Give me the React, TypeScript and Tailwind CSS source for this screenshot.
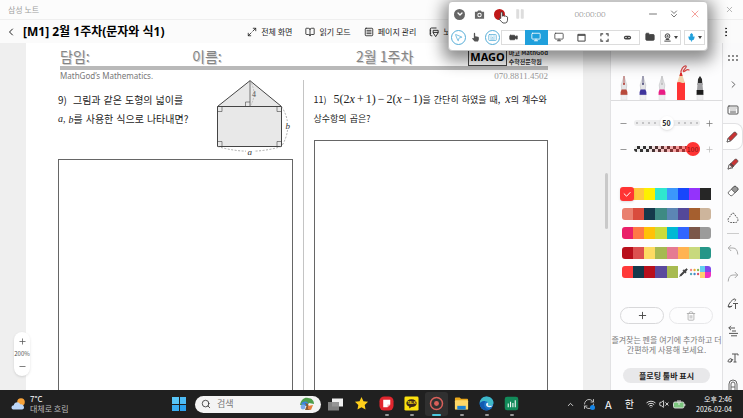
import React from "react";
import clsx from "clsx";
import {
  BookOpen,
  ChevronDown,
  ChevronLeft,
  ChevronRight,
  ChevronsDown,
  ChevronUp,
  EllipsisVertical,
  Folder,
  Keyboard,
  Maximize2,
  Mic,
  Minus,
  Monitor,
  MousePointer2,
  Pause,
  Pipette,
  Plus,
  RefreshCw,
  Search,
  SquareMenu,
  Trash2,
  Video,
  VolumeX,
  Wifi,
  X,
} from "lucide-react";

type IconProps = { className?: string };

const palettes = [
  ["#ff3b3b", "#ffc83d", "#fdf000", "#2fe6cf", "#3b97fb", "#1747fb", "#9433fb", "#262626"],
  ["#e9806f", "#d94c3d", "#15394b", "#3e8a83", "#5c86b4", "#544899", "#a55f2f", "#cdb59c"],
  ["#ea2069", "#ff7846", "#ffc107", "#cadb3a", "#00b9d4", "#3165ff", "#7b574a", "#9b9b9b"],
  ["#b80f1c", "#dc5050", "#fddb63", "#a6b952", "#e57a92", "#ffb351", "#c8d97d", "#259688"],
];
const recent = ["#ff3939", "#14394b", "#b80f1c", "#5a4a9d", "#a7ba50"];

const pens = [
  { name: "Fountain pen", color: "#b84a3c", tip: "#b23b33", x: "ml-2" },
  { name: "Calligraphy pen", color: "#3f349c", tip: "#4c4a7a", x: "" },
  { name: "Ballpoint pen", color: "#e91e84", tip: "#bbbbbb", x: "" },
];

const PenNib = ({ color, tip }: { color: string; tip: string }) => (
  <svg viewBox="0 0 10 26" className="h-[26px] w-[10px]">
    <path d="M5 2 L2.2 11 L2.8 16 H7.2 L7.8 11 Z" fill="#e4e4e6" stroke="#b9b9bd" strokeWidth=".5" />
    <path d="M5 2 V10" stroke={tip} strokeWidth=".8" />
    <circle cx="5" cy="10" r="1" fill={tip} />
    <path d="M2.6 15.5 H7.4 L8.4 18 V21 H1.6 V18 Z" fill={color} />
    <rect x="2" y="21" width="6" height="5" fill="#efeff1" stroke="#d5d5d8" strokeWidth=".4" />
  </svg>
);

const RedPencil = () => (
  <svg viewBox="0 0 16 36" className="h-9 w-4">
    <path d="M7 10 C6 6 10 1 12 2 C13.5 3 8 7 9.5 7.6 C11 8 12.5 4.5 15 6" fill="none" stroke="#e04848" strokeWidth="1.2" strokeLinecap="round" />
    <path d="M6 10 L3 19 H11 L8 10 Z" fill="#f0d3ae" />
    <path d="M6.2 9 L5.4 12 H8.6 L7.8 9 Z" fill="#df2c2c" />
    <path d="M3 18.5 Q5 17.5 7 18.5 T11 18.5 V36 H3 Z" fill="#ff3434" />
  </svg>
);

const BlackMarker = () => (
  <svg viewBox="0 0 10 26" className="h-[26px] w-[10px]">
    <path d="M5 2 L3 5 L2.6 11 H7.4 L7 5 Z" fill="#2b2b2b" />
    <path d="M2.6 9 L2 16 H8 L7.4 9 Z" fill="#a0a0a3" />
    <rect x="1.6" y="16" width="6.8" height="5" fill="#1c1c1c" />
    <rect x="2" y="21" width="6" height="5" fill="#efeff1" stroke="#d5d5d8" strokeWidth=".4" />
  </svg>
);

const GridDots = ({ className }: IconProps) => (
  <svg viewBox="0 0 12 12" className={className} fill="currentColor">
    {[2, 6, 10].map((x) => [4, 8].map((y) => <circle key={`${x}-${y}`} cx={x} cy={y} r="0.9" />))}
  </svg>
);

const DrawPencil = ({ marker }: { marker?: boolean }) => (
  <svg viewBox="0 0 12 12" className="size-3">
    <path d="M1 11 L2.2 7 L8 1.3 Q9 .6 10 1.6 L10.6 2.2 Q11.4 3.2 10.6 4 L5 9.8 Z" fill="#c93434" stroke="#4a4a4a" strokeWidth=".7" />
    <path d={marker ? "M2.2 6.5 L6 10 L3.5 9.8 L1 11.2 Z" : "M1 11 L2.1 7.6 L4.4 10 Z"} fill="#fff" stroke="#4a4a4a" strokeWidth=".7" />
    {marker && <path d="M3.4 5.4 L6.6 8.6" stroke="#4a4a4a" strokeWidth="1.4" />}
  </svg>
);

const EraserTool = () => (
  <svg viewBox="0 0 12 12" className="size-3">
    <path d="M1.6 7 L7 1.6 Q8 .8 9 1.6 L10.6 3.2 Q11.4 4.2 10.6 5.2 L5.2 10.4 Q4.2 11.2 3.2 10.4 L1.6 8.8 Q.8 7.8 1.6 7 Z" fill="#fff" stroke="#555" strokeWidth=".9" />
    <path d="M4.4 4.2 L7 1.6 Q8 .8 9 1.6 L10.6 3.2 Q11.4 4.2 10.6 5.2 L8 7.8 Z" fill="#999" stroke="#555" strokeWidth=".9" />
  </svg>
);

const LassoTool = () => (
  <svg viewBox="0 0 12 12" className="size-3" fill="none" stroke="#555" strokeWidth="1" strokeDasharray="1.7 1">
    <path d="M6 1.2 C8 1.2 8 4 9.5 5 C12 7 11 10.5 8.5 10.5 H3.5 C1 10.5 0 7 2.5 5 C4 4 4 1.2 6 1.2 Z" />
  </svg>
);

const UndoTool = ({ className }: IconProps) => (
  <svg viewBox="0 0 12 12" className={clsx("size-3", className)} fill="none" stroke="#aaa" strokeWidth="1">
    <path d="M4.2 1 L1.2 4 L4.2 7 M1.2 4 H6 Q10.5 4.2 10.8 10.5" />
  </svg>
);

const ShapeToText = () => (
  <svg viewBox="0 0 12 12" className="size-3" fill="none" stroke="#555" strokeWidth="1">
    <path d="M5 8.5 H1 C2 5 5 2 7 1 C9 .6 9 2 7.8 3.4 M6 5.5 H11 M8.5 5.5 V11 M1 8.5 C2 10 4 9 5 7.5" />
  </svg>
);

const AlignTool = () => (
  <svg viewBox="0 0 12 12" className="size-3" fill="none" stroke="#555" strokeWidth="1">
    <path d="M4 .8 L1.8 3 L4 5.2 M1.8 3 H8 M5 6 H9 M2 8.4 H11 M4 10.8 H10" />
  </svg>
);

const HandwritingTool = () => (
  <svg viewBox="0 0 12 12" className="size-3" fill="none" stroke="#555" strokeWidth="1">
    <path d="M5 2 H11 M8 2 V10 M11 2 V3.5 M6.5 10 H9.5 M1 10 C1 7 4 6 4.5 7 L4 10 L1.5 10 M4 10 L6 7" />
  </svg>
);

const TextTool = () => (
  <svg viewBox="0 0 12 12" className="size-3" fill="none" stroke="#666" strokeWidth="1">
    <path d="M2 11 V5 Q2 1 6 1 T10 5 V11 M4 11 V5 Q4 3 6 3 T8 5 V11 M4 8 H8" />
  </svg>
);

const House = () => (
  <svg viewBox="0 0 78 77" className="h-[77px] w-[78px] shrink-0" fill="none" stroke="#444" strokeWidth="1">
    <path d="M2.5 26.5 L35 .7 L66.5 26.5 V66.5 H2.5 Z" fill="#e8e8e8" />
    <path d="M2.5 26.5 H66.5" />
    <path d="M35 .7 V26.5" strokeWidth=".7" />
    <path d="M2.5 31.5 H7 V26.5 M66.5 31.5 H62 V26.5 M2.5 61.5 H7 V66.5 M66.5 61.5 H62 V66.5 M30.5 26.5 V22 H35" strokeWidth=".6" />
    <path d="M35 .7 Q43 14 35 26.5" stroke="#999" strokeWidth=".5" strokeDasharray="2 1" />
    <path d="M66.5 26.5 Q79 46 66.5 66.5 M2.5 66.5 Q35 76 66.5 66.5" stroke="#888" strokeWidth=".7" strokeDasharray="2 1.5" />
    <rect x="31" y="68" width="8" height="8" fill="#fff" stroke="none" />
    <rect x="70" y="41" width="6" height="9" fill="#fff" stroke="none" />
    <g fill="#333" stroke="none" fontFamily="Liberation Serif, serif" fontSize="9">
      <text x="37" y="17" fontSize="8" fill="#555">
        4
      </text>
      <text x="70.5" y="49" fontStyle="italic">
        b
      </text>
      <text x="32.5" y="75" fontStyle="italic">
        a
      </text>
    </g>
  </svg>
);

const ViewActions = () => {
  const actions = [
    { label: "전체 화면", icon: <Maximize2 className="size-[10px]" /> },
    { label: "읽기 모드", icon: <BookOpen className="size-[10px]" /> },
    { label: "페이지 관리", icon: <SquareMenu className="size-[10px]" /> },
    {
      label: "노트",
      icon: (
        <svg viewBox="0 0 12 12" className="size-[10px]" fill="none" stroke="currentColor" strokeWidth="1.1">
          <path d="M4 10.5 H2.5 Q1.5 10.5 1.5 9.5 V2.5 Q1.5 1.2 3 1.2 H9 M1 4 H2.6 M1 6 H2.6 M1 8 H2.6" />
          <path d="M5 4 H11 V7 L8 11.5 L5 7 Z M5 6.5 H11" />
        </svg>
      ),
    },
  ];
  return (
    <nav className="ml-auto flex shrink-0 items-center gap-[13px] text-[8px] leading-3">
      {actions.map((el) => (
        <button key={el.label} className="flex items-center gap-1 whitespace-nowrap">
          {el.icon}
          {el.label}
        </button>
      ))}
    </nav>
  );
};

const Worksheet = () => (
  <article className="flex min-w-0 flex-1 flex-col bg-white pr-[35px] pl-8">
    <div className="ml-[2px] flex h-[23px] shrink-0 items-center pt-[2px] text-[14px] leading-5 text-[#858585] [text-shadow:1px_1px_0_#cfcfcf]">
      <span className="w-[132px]">담임:</span>
      <span className="w-[164px]">이름:</span>
      <span>2월 1주차</span>
      <div className="ml-auto flex items-end gap-[2px] self-stretch text-black [text-shadow:none]">
        <strong className="border border-[#444] px-px font-['Noto_Sans','Noto_Sans_CJK_KR',sans-serif] text-[11px] leading-[17px]">MAGO</strong>
        <span className="text-[6px] leading-[9px] font-bold whitespace-nowrap text-[#333]">
          마고 MathGod
          <br />
          수학전문학원
        </span>
      </div>
    </div>
    <div className="ml-[2px] h-1 shrink-0 bg-[#b9b9b9]" />
    <div className="ml-[2px] flex h-[10px] shrink-0 justify-between text-[8px] leading-3 text-[#777]">
      <span className="font-['Noto_Sans',sans-serif]">MathGod’s Mathematics.</span>
      <span className="font-['Liberation_Serif',serif] text-[9px] text-[#999]">070.8811.4502</span>
    </div>
    <div className="grid min-h-0 flex-1 grid-cols-[1fr_1px_1fr] gap-x-[10px]">
      <section className="flex min-w-0 flex-col">
        <div className="flex h-[79px] shrink-0 justify-between">
          <div className="pt-[10px] text-[10px] leading-[19px] whitespace-nowrap">
            <p className="flex gap-[3px]">
              <span className="mr-[3px]">9)</span>
              <span>그림과</span>
              <span>같은</span>
              <span>도형의</span>
              <span>넓이를</span>
            </p>
            <p className="flex gap-[3px]">
              <i className="font-['Liberation_Serif',serif]">a,</i>
              <span>
                <i className="font-['Liberation_Serif',serif]">b</i>를
              </span>
              <span>사용한</span>
              <span>식으로</span>
              <span>나타내면?</span>
            </p>
          </div>
          <House />
        </div>
        <div className="flex-1 border border-b-0 border-[#666]" />
      </section>
      <div className="bg-[#c4c4c4]" />
      <section className="flex min-w-0 flex-col">
        <div className="h-[60px] shrink-0 pt-[10px] text-[9px] leading-[19px] whitespace-nowrap">
          <p className="flex gap-[3px]">
            <span className="mr-1">11)</span>
            <span>
              <span className="font-['Liberation_Serif',serif] text-[12px]">
                5(2<i>x</i>
                <span className="mx-[2px]">+</span>1)<span className="mx-[2px]">−</span>2(<i>x</i>
                <span className="mx-[2px]">−</span>1)
              </span>
              을
            </span>
            <span>간단히</span>
            <span>하였을</span>
            <span>때,</span>
            <span className="ml-[2px]">
              <i className="font-['Liberation_Serif',serif] text-[12px]">x</i>의
            </span>
            <span>계수와</span>
          </p>
          <p className="flex gap-[3px]">
            <span>상수항의</span>
            <span>곱은?</span>
          </p>
        </div>
        <div className="flex-1 border border-b-0 border-[#666]" />
      </section>
    </div>
  </article>
);

const PenPanel = () => (
  <aside className="flex w-28 shrink-0 flex-col border-l border-[#e2e2e4] bg-[#fdfdfe]">
    <div className="flex h-[58px] shrink-0 items-end gap-[9px] border-b border-[#dcdcde]">
      {pens.map((el) => (
        <button key={el.name} aria-label={el.name} className={el.x}>
          <PenNib color={el.color} tip={el.tip} />
        </button>
      ))}
      <button aria-label="Pencil" className="-ml-[2px]">
        <RedPencil />
      </button>
      <button aria-label="Marker" className="-ml-1">
        <BlackMarker />
      </button>
    </div>
    <div className="flex shrink-0 flex-col gap-3 px-2 pt-[15px] text-[#777]">
      <div className="flex h-[14px] items-center justify-between">
        <button aria-label="Thinner">
          <Minus className="size-[9px]" />
        </button>
        <div className="relative flex w-[66px] items-center">
          <input
            type="range"
            aria-label="Thickness"
            defaultValue={50}
            className="h-[6px] w-full appearance-none rounded-full bg-[#eeeeef] bg-[radial-gradient(circle,#c4c4c6_1px,transparent_1.5px)] bg-[length:6px_6px] [&::-webkit-slider-thumb]:size-[14px] [&::-webkit-slider-thumb]:appearance-none [&::-webkit-slider-thumb]:rounded-full [&::-webkit-slider-thumb]:bg-white [&::-webkit-slider-thumb]:shadow"
          />
          <span className="pointer-events-none absolute inset-x-0 text-center text-[7px] leading-[14px] font-bold text-[#222]">50</span>
        </div>
        <button aria-label="Thicker">
          <Plus className="size-[9px]" />
        </button>
      </div>
      <div className="flex h-[14px] items-center justify-between">
        <button aria-label="More transparent">
          <Minus className="size-[9px]" />
        </button>
        <div className="relative flex w-[66px] items-center">
          <input
            type="range"
            aria-label="Opacity"
            defaultValue={100}
            className="h-[6px] w-full appearance-none rounded-full bg-[linear-gradient(90deg,transparent_20%,#f33c_100%),repeating-conic-gradient(#333_0_25%,#eee_0_50%)] bg-[length:100%_100%,6px_6px] [&::-webkit-slider-thumb]:size-[14px] [&::-webkit-slider-thumb]:appearance-none [&::-webkit-slider-thumb]:rounded-full [&::-webkit-slider-thumb]:bg-[#ff3434]"
          />
          <span className="pointer-events-none absolute right-0 w-[14px] text-center text-[7px] leading-[14px] text-[#7a1010]">100</span>
        </div>
        <button aria-label="Less transparent" className="text-[#bbb]">
          <Plus className="size-[9px]" />
        </button>
      </div>
    </div>
    <div className="mt-8 flex h-[90px] shrink-0 flex-col justify-between px-[11px]">
      {palettes.map((row, i) => (
        <div key={i} className="relative flex h-3">
          {row.map((color) => (
            <button key={color} aria-label={color} className="flex-1 first:rounded-l-[3px] last:rounded-r-[3px]" style={{ backgroundColor: color }} />
          ))}
          {i === 0 && (
            <span className="absolute -top-px -left-[2px] flex size-[14px] items-center justify-center rounded-[3px] bg-[#ff3434] text-white shadow">
              <svg viewBox="0 0 10 10" className="size-[10px]" fill="none" stroke="currentColor" strokeWidth="1">
                <path d="M1.8 4.5 L4.6 7.2 L8.4 3.2" />
              </svg>
            </span>
          )}
        </div>
      ))}
      <div className="flex h-3">
        {recent.map((color) => (
          <button key={color} aria-label={color} className="flex-1 first:rounded-l-[3px]" style={{ backgroundColor: color }} />
        ))}
        <button aria-label="Colour picker" className="flex flex-1 items-center justify-center text-[#444]">
          <Pipette className="size-[9px]" fill="currentColor" />
        </button>
        <button aria-label="Palettes" className="flex-1">
          <svg viewBox="0 0 11 12" className="h-3 w-full">
            {["#e88", "#ea3", "#8b5", "#5ab", "#48c", "#d56"].map((c, i) => (
              <circle key={c} cx={2 + (i % 3) * 3.5} cy={i < 3 ? 4 : 8} r="1.2" fill={c} />
            ))}
          </svg>
        </button>
        <button aria-label="Spectrum" className="grid flex-1 grid-cols-2 overflow-hidden rounded-r-[3px]">
          <span className="bg-[#62d0f0]" />
          <span className="bg-[#7b4bea]" />
          <span className="bg-[#ffcf70]" />
          <span className="bg-[#ee2fc0]" />
        </button>
      </div>
    </div>
    <div className="mt-[29px] flex shrink-0 justify-center gap-[5px]">
      <button aria-label="Add pen" className="flex h-[17px] w-11 items-center justify-center rounded-full border border-[#d8d8da] text-[#444]">
        <Plus className="size-[11px]" />
      </button>
      <button aria-label="Delete pen" className="flex h-[17px] w-11 items-center justify-center rounded-full border border-[#e8e8ea] text-[#aaa]">
        <Trash2 className="size-[10px]" />
      </button>
    </div>
    <div className="mt-[11px] text-center text-[8px] leading-[10px] whitespace-nowrap text-[#7c7c7c]">
      <p>즐겨찾는 펜을 여기에 추가하고 더</p>
      <p>간편하게 사용해 보세요.</p>
    </div>
    <button className="mx-auto mt-[13px] h-[15px] w-[87px] shrink-0 rounded-full bg-[#e8e8ea] text-[8px] leading-[15px] font-bold">플로팅 툴바 표시</button>
  </aside>
);

const ToolRail = () => (
  <aside className="flex w-[21px] shrink-0 flex-col overflow-hidden border-l border-[#e2e2e4] bg-[#fafafb] pt-[2px] text-[#555]">
    {[<GridDots className="size-3" />, <ChevronRight className="size-[11px]" />, <Keyboard className="size-3" />].map((icon, i) => (
      <button key={i} aria-label={["Handle", "Collapse", "Keyboard"][i]} className="flex h-[26px] shrink-0 items-center justify-center">
        {icon}
      </button>
    ))}
    {[<DrawPencil />, <DrawPencil marker />, <EraserTool />, <LassoTool />].map((icon, i) => (
      <button
        key={i}
        aria-label={["Pen", "Highlighter", "Eraser", "Lasso"][i]}
        className={clsx("flex h-[27px] shrink-0 items-center justify-center", i === 0 && "-ml-px rounded-r-lg border border-l-0 border-[#e2e2e4] bg-white")}
      >
        {icon}
      </button>
    ))}
    <div className="mx-1 my-[2px] h-px shrink-0 bg-[#ccc]" />
    {[<UndoTool />, <UndoTool className="-scale-x-100" />, <ShapeToText />, <AlignTool />, <HandwritingTool />, <TextTool />].map((icon, i) => (
      <button key={i} aria-label={["Undo", "Redo", "To text", "Align", "Handwriting", "Text"][i]} className="flex h-[27px] shrink-0 items-center justify-center">
        {icon}
      </button>
    ))}
  </aside>
);

const Recorder = () => (
  <div className="absolute top-px right-[35px] w-[260px] rounded-[4px] border border-[#c4c4c4] bg-white shadow-[0_5px_16px_5px_rgba(0,0,0,0.45)]">
    <div className="flex h-6 items-center pr-[6px] pl-[5px] text-[#777]">
      <button aria-label="Menu" className="flex size-[11px] items-center justify-center rounded-full bg-[#666] text-white">
        <ChevronDown className="size-2" strokeWidth={4} />
      </button>
      <button aria-label="Screenshot" className="ml-[9px]">
        <svg viewBox="0 0 12 12" className="size-[11px]">
          <path d="M1 3 H3.5 L4.5 1.5 H7.5 L8.5 3 H11 V10.5 H1 Z" fill="#666" />
          <circle cx="6" cy="6.6" r="2.4" fill="#fff" />
          <circle cx="6" cy="6.6" r="1.3" fill="#666" />
        </svg>
      </button>
      <button aria-label="Record" className="relative ml-[9px] size-[11px] rounded-full bg-[#c01818]">
        <svg viewBox="0 0 12 14" className="absolute top-[2px] left-[4px] h-[13px] w-[11px]">
          <path d="M3 8 V2 Q3 1 4 1 T5 2 V5.5 Q6 4.6 7 5.6 Q8 4.8 8.8 5.9 Q10 5.4 10.4 6.6 V10 Q10 13 8 13 H5.5 Q4 12 1.2 8.8 Q1 7.2 3 8 Z" fill="#fff" stroke="#333" strokeWidth=".9" />
        </svg>
      </button>
      <button aria-label="Pause" className="ml-[9px] text-[#ddd]">
        <Pause className="size-3" fill="currentColor" strokeWidth={1} />
      </button>
      <time className="mx-auto pl-[7px] font-['Open_Sans',sans-serif] text-[8px] font-light text-[#555]">00:00:00</time>
      <div className="flex gap-[9px]">
        <button aria-label="Minimize">
          <Minus className="size-3" />
        </button>
        <button aria-label="Collapse">
          <ChevronsDown className="size-3" />
        </button>
        <button aria-label="Close" className="text-[#f5a09b]">
          <X className="size-3" />
        </button>
      </div>
    </div>
    <div className="flex h-6 items-center pr-[2px] pb-[2px] pl-[2px] text-[#444]">
      <button aria-label="Show cursor" className="flex size-[15px] items-center justify-center rounded-full border border-[#54add8] text-[#54add8]">
        <MousePointer2 className="size-[9px]" />
      </button>
      <button aria-label="Show clicks" className="mx-[5px]">
        <svg viewBox="0 0 10 12" className="h-[10px] w-[9px]" fill="#555">
          <path d="M3 7 V2 Q3 1 3.8 1 T4.6 2 V5 L8 5.8 Q9 6 9 7 V9 L8 11.5 H4 L1 8 Q1 6.4 3 7.5 Z" />
        </svg>
      </button>
      <button aria-label="Show keys" className="flex size-[15px] items-center justify-center rounded-full border border-[#54add8] text-[#54add8]">
        <Keyboard className="size-[9px]" />
      </button>
      <div className="ml-px flex h-[15px] flex-1 items-stretch border border-[#dcdcdc]">
        <button aria-label="Camera" className="flex flex-1 items-center justify-center">
          <Video className="size-[9px]" fill="currentColor" />
        </button>
        <button aria-label="Screen area" className="-my-px flex flex-1 items-center justify-center bg-[#20a0dc] text-white">
          <Monitor className="size-[10px]" />
        </button>
        <button aria-label="Monitor" className="flex flex-1 items-center justify-center">
          <Monitor className="size-[10px]" />
        </button>
        <button aria-label="Window" className="flex flex-1 items-center justify-center">
          <svg viewBox="0 0 10 10" className="size-[9px]" fill="none" stroke="currentColor">
            <path d="M1 1.5 H9 V9 H1 Z M1 2.6 H9" strokeWidth="1.1" />
          </svg>
        </button>
        <button aria-label="Full screen" className="flex flex-1 items-center justify-center">
          <svg viewBox="0 0 10 10" className="size-[9px]" fill="none" stroke="currentColor" strokeWidth="1.2">
            <path d="M1 3.5 V1 H3.5 M6.5 1 H9 V3.5 M9 6.5 V9 H6.5 M3.5 9 H1 V6.5" />
          </svg>
        </button>
        <button aria-label="Game" className="flex flex-1 items-center justify-center">
          <svg viewBox="0 0 10 10" className="size-[9px]">
            <rect x="1" y="3" width="8" height="4.2" rx="2" fill="currentColor" />
            <path d="M2.3 5 H4.3 M5.7 5 H7.7" stroke="#fff" strokeWidth=".8" />
          </svg>
        </button>
      </div>
      <button aria-label="Open folder" className="mx-[5px]">
        <Folder className="size-[10px]" fill="currentColor" />
      </button>
      <button aria-label="Webcam" className="mr-[3px] flex h-[15px] w-[21px] items-center justify-center gap-[2px] border border-[#dcdcdc]">
        <svg viewBox="0 0 10 10" className="size-[9px]" fill="none" stroke="currentColor" strokeWidth="1.1">
          <circle cx="5" cy="3.5" r="2.6" />
          <circle cx="5" cy="3.5" r=".8" />
          <path d="M3 7.2 H7 M1.5 9 H8.5" />
        </svg>
        <svg viewBox="0 0 4 3" className="h-[3px] w-1">
          <path d="M0 0 H4 L2 3 Z" fill="currentColor" />
        </svg>
      </button>
      <button aria-label="Microphone" className="flex h-[15px] w-[21px] items-center justify-center gap-[2px] border border-[#dcdcdc]">
        <Mic className="size-[9px] text-[#20a0dc]" fill="currentColor" />
        <svg viewBox="0 0 4 3" className="h-[3px] w-1">
          <path d="M0 0 H4 L2 3 Z" fill="currentColor" />
        </svg>
      </button>
    </div>
  </div>
);

const apps = [
  {
    name: "Star",
    icon: <path d="M8 1 L10.1 5.6 L15 6.2 L11.4 9.6 L12.3 14.5 L8 12 L3.7 14.5 L4.6 9.6 L1 6.2 L5.9 5.6 Z" fill="#ffcf1b" />,
  },
  {
    name: "Notes",
    running: true,
    icon: (
      <>
        <rect x=".5" y=".5" width="15" height="15" rx="5" fill="#e0262e" />
        <path d="M4.5 4 H12 V9 L9 12 H4.5 Z" fill="#fff" />
        <path d="M9 12 V9 H12" fill="#f5b5b8" />
      </>
    ),
  },
  {
    name: "KakaoTalk",
    running: true,
    icon: (
      <>
        <rect x=".5" y=".5" width="15" height="15" rx="1.5" fill="#fbe10f" />
        <path d="M8 3.4 C11.5 3.4 13.5 5.4 13.5 7.6 S11.5 11.6 8 11.6 L5.5 13.4 L5.6 11.2 C3.6 10.6 2.5 9.2 2.5 7.6 C2.5 5.4 4.5 3.4 8 3.4 Z" fill="#3a2518" />
        <text x="8" y="9" fontSize="3.6" fontWeight="bold" textAnchor="middle" fill="#fbe10f" fontFamily="Liberation Sans, sans-serif">
          TALK
        </text>
      </>
    ),
  },
  {
    name: "Recorder",
    running: true,
    active: true,
    icon: (
      <>
        <circle cx="8" cy="8" r="6.4" fill="none" stroke="#d9605a" strokeWidth="1.6" />
        <circle cx="8" cy="8" r="2.6" fill="#d9605a" />
      </>
    ),
  },
  {
    name: "Explorer",
    running: true,
    icon: (
      <>
        <path d="M1 2.5 Q1 1.5 2 1.5 H6 L7.5 3 H14 Q15 3 15 4 V14 H1 Z" fill="#eba91c" />
        <rect x="1" y="4.5" width="14" height="10" rx="1" fill="#fdd768" />
        <path d="M3.5 10.5 H12.5 V14.5 H3.5 Z" fill="#1c83d4" />
      </>
    ),
  },
  {
    name: "Edge",
    running: true,
    icon: (
      <>
        <circle cx="8" cy="8" r="7.4" fill="#1a73c8" />
        <path d="M.8 8 C1 3.5 4.2 .6 8 .6 C12.4 .6 15.4 3.8 15.4 7 C15.4 9.5 13 10.8 10.5 10.4 C9 10 9.8 9.3 9.9 8.3 C10 6.5 8.2 5.2 6 5.2 C3.5 5.2 1.6 6.4 .8 8 Z" fill="#3fb9c8" />
        <path d="M5.4 8.5 C5.2 11.5 7.6 14.2 10.6 14.6 C6 16.6 1.4 13 .7 8.4 C1.8 6 4 5.2 6 5.3 C7 5.4 5.6 7 5.4 8.5 Z" fill="#125ab0" />
        <path d="M9.9 8.3 C9.8 9.3 9 10 10.5 10.4 C12.5 10.8 14 10.2 14.8 9.2 C13.8 12.2 10.2 12.6 8.2 10.8 C7 9.6 7.4 7.4 9 6.8 C9.7 7.2 9.9 7.8 9.9 8.3 Z" fill="#e9f6fb" />
      </>
    ),
  },
  {
    name: "Charts",
    running: true,
    icon: (
      <>
        <rect x=".8" y=".8" width="14.4" height="14.4" rx="2.5" fill="#128a5a" />
        <path d="M4.5 12 V8 M7 12 V6 M9.5 12 V7.5 M12 12 V4.5" stroke="#fff" strokeWidth="1.1" />
      </>
    ),
  },
];

const Taskbar = () => (
  <footer className="flex h-7 shrink-0 items-center bg-[#202020] text-white">
    <button className="flex w-[172px] shrink-0 items-center gap-[5px] pl-[11px] text-left text-[8px] leading-[10px]">
      <svg viewBox="0 0 14 12" className="h-3 w-[14px]">
        <circle cx="10" cy="4" r="3.8" fill="#f7a239" />
        <path d="M3.2 11.5 C-.5 11.5 -.2 7.4 2.8 7.2 C3.2 3.4 8.4 3.2 9.2 6.4 C13 5.6 14.6 11.5 11 11.5 Z" fill="#bcd6f7" />
      </svg>
      <span>
        7°C
        <br />
        <span className="text-[#bbb]">대체로 흐림</span>
      </span>
    </button>
    <button aria-label="Start" className="grid size-[14px] shrink-0 grid-cols-2 gap-px">
      <span className="bg-[#58c6f8]" />
      <span className="bg-[#4dbcf6]" />
      <span className="bg-[#3aaef2]" />
      <span className="bg-[#2ba1ee]" />
    </button>
    <label className="ml-[9px] flex h-[17px] w-[126px] shrink-0 items-center gap-[6px] rounded-full bg-[#f4f4f4] px-[6px] text-[#333]">
      <Search className="size-[10px] shrink-0" />
      <input type="search" aria-label="검색" placeholder="검색" className="w-0 min-w-0 flex-1 bg-transparent text-[9px] leading-3 outline-none placeholder:text-[#777]" />
      <svg viewBox="0 0 16 14" className="h-[14px] w-4 shrink-0">
        <path d="M1 8 C2 2 6 0 9 1 C13 1 15 4 15 7 L10 6 L8 9 Z" fill="#4f9e4b" />
        <path d="M2 7 C4 4 7 4 9 6 L7 9 Z" fill="#3b86dd" />
        <path d="M6 6 L9 7 L11 13 H6 L7.5 9 Z" fill="#8a5a34" />
        <path d="M9 9 L14 8 L12 13 L9 12 Z" fill="#e57f3a" />
        <circle cx="4" cy="10" r="2.4" fill="#7aa8e8" />
      </svg>
    </label>
    <button aria-label="Task view" className="mx-[7px] shrink-0">
      <svg viewBox="0 0 15 13" className="h-[13px] w-[15px]">
        <rect x="4" y=".5" width="11" height="8" fill="#f0f0f0" />
        <rect x="0" y="4" width="11" height="8.5" fill="#8c8c8c" opacity=".9" />
      </svg>
    </button>
    <div className="flex shrink-0 gap-[2px]">
      {apps.map((el) => (
        <button key={el.name} aria-label={el.name} className={clsx("relative flex h-6 w-[23px] justify-center rounded-[3px] pt-1", el.active && "bg-[#303030]")}>
          <svg viewBox="0 0 16 16" className="size-[15px]">
            {el.icon}
          </svg>
          {el.running && <span className={clsx("absolute bottom-0 h-[2px] rounded-full", el.active ? "w-[9px] bg-[#4cc9e0]" : "w-1 bg-[#999]")} />}
        </button>
      ))}
    </div>
    <div className="ml-auto flex items-center pr-[11px]">
      <ChevronUp className="size-[9px]" />
      <span className="relative ml-2">
        <RefreshCw className="size-3 text-[#bbb]" />
        <span className="absolute right-0 bottom-0 size-[5px] rounded-full bg-[#1686e8]" />
      </span>
      <span className="ml-[9px] w-[9px] text-center text-[11px] leading-4">A</span>
      <span className="ml-3 text-[10px] leading-4">한</span>
      <Wifi className="ml-3 size-[10px]" />
      <VolumeX className="ml-[3px] size-[10px]" />
      <svg viewBox="0 0 13 9" className="ml-1 h-[9px] w-[13px]">
        <rect x=".5" y="2" width="10.5" height="6" rx="1.5" fill="#7cc57e" stroke="#e5e5e5" strokeWidth=".9" />
        <path d="M11.8 4 V6 M5 0 V3 M7 0 V3 M6 3 V5" stroke="#e5e5e5" strokeWidth="1" />
      </svg>
      <time className="ml-[10px] text-right text-[7px] leading-[10px] whitespace-nowrap">
        오후 2:46
        <br />
        2026-02-04
      </time>
    </div>
  </footer>
);

const App = () => {
  return (
    <div className="relative flex h-screen flex-col overflow-hidden bg-[#efefef] font-['Noto_Sans_CJK_KR',sans-serif] text-[#222]">
      <div className="flex h-5 shrink-0 items-center justify-between border-b border-[#efefef] bg-[#fcfcfc] pr-[9px] pl-2 text-[8px] text-[#a0a0a0]">
        <span>삼성 노트</span>
        <button aria-label="Close">
          <X className="size-[9px]" />
        </button>
      </div>
      <header className="flex h-[23px] shrink-0 items-center bg-[#fbfbfb] pr-[11px] pl-[5px]">
        <button aria-label="Back">
          <ChevronLeft className="size-3" />
        </button>
        <h1 className="ml-[6px] font-['Noto_Sans','Noto_Sans_CJK_KR',sans-serif] text-[12px] leading-4 font-bold whitespace-nowrap text-black">[M1] 2월 1주차(문자와 식1)</h1>
        <ViewActions />
        <button aria-label="More" className="ml-[262px] shrink-0">
          <EllipsisVertical className="size-3" />
        </button>
      </header>
      <main className="relative flex min-h-0 flex-1">
        <div className="w-[26px] shrink-0" />
        <Worksheet />
        <div className="flex w-[27px] shrink-0 justify-end pt-[130px]">
          <div className="mr-[2px] h-[56px] w-[3px] rounded-full bg-[#c9c9c9]" />
        </div>
        <PenPanel />
        <ToolRail />
        <div className="absolute bottom-[14px] left-[14px] flex h-11 w-4 flex-col items-center justify-between rounded-full bg-white py-[5px] text-[#555] shadow">
          <button aria-label="Zoom in">
            <Plus className="size-[9px]" />
          </button>
          <span className="text-[6px] leading-2">200%</span>
          <button aria-label="Zoom out">
            <Minus className="size-[9px]" />
          </button>
        </div>
      </main>
      <Taskbar />
      <Recorder />
    </div>
  );
};

export default App;
